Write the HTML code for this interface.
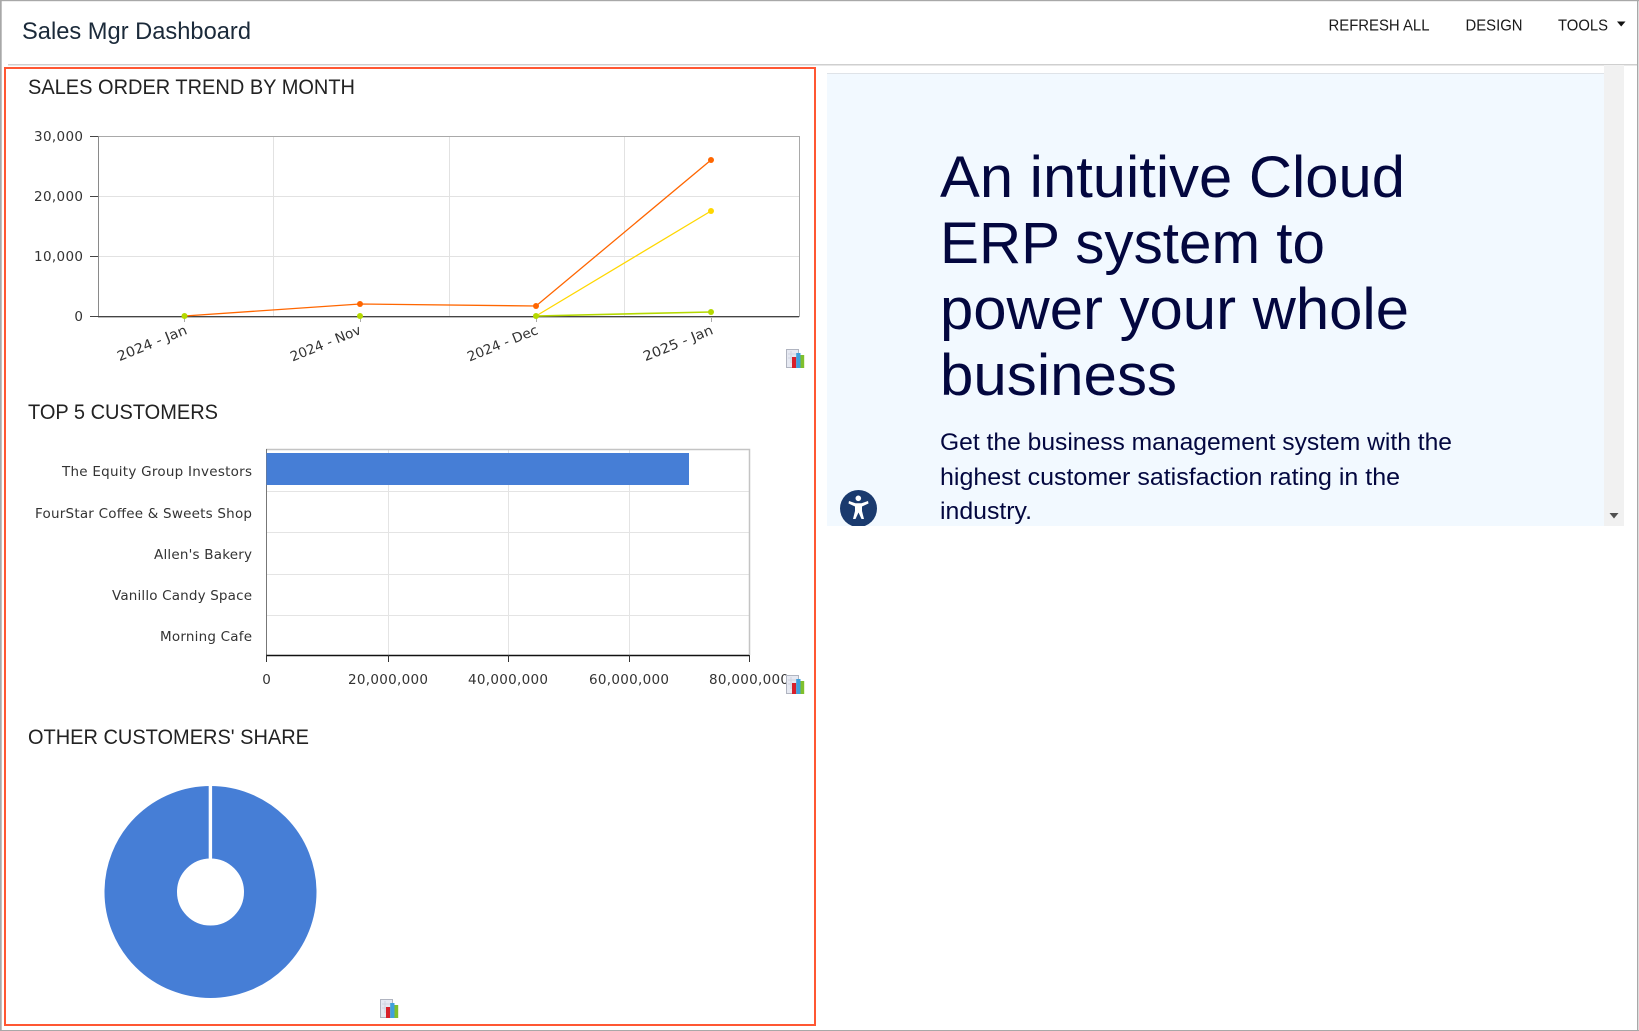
<!DOCTYPE html>
<html><head><meta charset="utf-8"><title>Sales Mgr Dashboard</title>
<style>
html,body{margin:0;padding:0;background:#fff;width:1639px;height:1031px;overflow:hidden}
svg{display:block}
text{font-family:"Liberation Sans",Arial,sans-serif}
.d{font-family:"DejaVu Sans",Verdana,sans-serif;font-size:13.5px;fill:#333}
.t{font-size:21px;fill:#222}
.n{font-size:15.5px;fill:#1a1a1a}
.h{font-size:58px;fill:#03073f}
.p{font-size:24px;fill:#03073f}
</style></head><body>
<svg width="1639" height="1031" viewBox="0 0 1639 1031" xmlns="http://www.w3.org/2000/svg">
<defs>
<clipPath id="hc"><rect x="827" y="65" width="777" height="461"/></clipPath>
<g id="ic">
<rect x="0.5" y="0.5" width="12" height="18" fill="#e6e9f2" stroke="#b0b4c0"/>
<path d="M2 5H11M2 9H11M5 2V14" stroke="#d0d4e0" fill="none"/>
<rect x="6" y="8" width="4.2" height="11" fill="#d8202a"/>
<rect x="10.2" y="4" width="4.3" height="15" fill="#3fa0dc"/>
<rect x="14.5" y="6" width="3.7" height="13" fill="#7fc02c"/>
</g>
</defs>
<!-- outer frame -->
<rect x="0" y="0" width="1639" height="1.2" fill="#a8a8a8"/>
<rect x="0" y="0" width="1.7" height="1031" fill="#a8a8a8"/>
<rect x="0" y="1030" width="1639" height="1" fill="#a8a8a8"/>
<rect x="1637" y="0" width="1.4" height="1031" fill="#a8a8a8"/>
<!-- header -->
<text x="22" y="39" font-size="24" fill="#1b2a3a" textLength="229" lengthAdjust="spacingAndGlyphs">Sales Mgr Dashboard</text>
<text class="n" x="1328.5" y="30.5" textLength="101" lengthAdjust="spacingAndGlyphs">REFRESH ALL</text>
<text class="n" x="1465.5" y="30.5" textLength="57" lengthAdjust="spacingAndGlyphs">DESIGN</text>
<text class="n" x="1558" y="30.5" textLength="50" lengthAdjust="spacingAndGlyphs">TOOLS</text>
<path d="M1617 21.5H1625.5L1621.2 26.5Z" fill="#111"/>
<rect x="8" y="64" width="1629" height="1.5" fill="#cfcfcf"/>
<!-- left red panel -->
<rect x="5" y="68" width="810" height="957" fill="#fff" stroke="#ff5733" stroke-width="2"/>
<!-- chart 1 -->
<text class="t" x="28" y="94" textLength="327" lengthAdjust="spacingAndGlyphs">SALES ORDER TREND BY MONTH</text>
<g fill="none" stroke-width="1">
<path d="M273.5 136V316M449.5 136V316M624.5 136V316M98 196.5H799M98 256.5H799" stroke="#e2e2e2"/>
<path d="M98.5 136.5H799.5V317" stroke="#a9a9a9"/>
<path d="M98.5 136V316" stroke="#8a8a8a"/>
<path d="M90 136.5H98M90 196.5H98M90 256.5H98M90 316.5H98" stroke="#444"/>
<path d="M184.5 316V322M360.5 316V322M536.5 316V322M711.5 316V322" stroke="#aaa"/>
<path d="M98 317.5H799" stroke="#bbb"/>
<path d="M90 316.5H799" stroke="#444"/>
</g>
<text class="d" x="83" y="141" text-anchor="end" textLength="49">30,000</text>
<text class="d" x="83" y="201" text-anchor="end" textLength="49">20,000</text>
<text class="d" x="83" y="261" text-anchor="end" textLength="49">10,000</text>
<text class="d" x="83" y="321" text-anchor="end">0</text>
<polyline points="536,316 711,312" fill="none" stroke="#b5d900" stroke-width="1.6"/>
<polyline points="536,316 711,211" fill="none" stroke="#ffd700" stroke-width="1.3"/>
<polyline points="184.5,316 360,304 536,306 711,160" fill="none" stroke="#ff6600" stroke-width="1.3"/>
<g fill="#ff6600"><circle cx="360" cy="304" r="3"/><circle cx="536" cy="306" r="3"/><circle cx="711" cy="160" r="3"/></g>
<circle cx="711" cy="211" r="3" fill="#ffd700"/>
<g fill="#b5d900"><circle cx="184.5" cy="316" r="3"/><circle cx="360" cy="316" r="3"/><circle cx="536" cy="316" r="3"/><circle cx="711" cy="312" r="3"/></g>
<text class="d" transform="translate(188 333.5) rotate(-22)" text-anchor="end" textLength="74" lengthAdjust="spacingAndGlyphs">2024 - Jan</text>
<text class="d" transform="translate(362 333.5) rotate(-22)" text-anchor="end" textLength="75" lengthAdjust="spacingAndGlyphs">2024 - Nov</text>
<text class="d" transform="translate(539 333.5) rotate(-22)" text-anchor="end" textLength="75" lengthAdjust="spacingAndGlyphs">2024 - Dec</text>
<text class="d" transform="translate(714 333.5) rotate(-22)" text-anchor="end" textLength="74" lengthAdjust="spacingAndGlyphs">2025 - Jan</text>
<use href="#ic" x="786" y="349"/>
<!-- chart 2 -->
<text class="t" x="28" y="419" textLength="190" lengthAdjust="spacingAndGlyphs">TOP 5 CUSTOMERS</text>
<g fill="none" stroke-width="1">
<path d="M388.5 449V655M508.5 449V655M629.5 449V655M266 491.5H749M266 532.5H749M266 574.5H749M266 615.5H749" stroke="#e4e4e4"/>
<path d="M266 449.5H749.5V655" stroke="#c4c4c4" stroke-width="1.5"/>
<path d="M266.5 449V655" stroke="#777"/>
<path d="M266 655.5H749" stroke="#111" stroke-width="1.5"/>
<path d="M266.5 655V662M388.5 655V662M508.5 655V662M629.5 655V662M749.5 655V662" stroke="#333"/>
</g>
<rect x="266.5" y="453" width="422.5" height="32" fill="#467ed6"/>
<text class="d" x="252" y="476" text-anchor="end" textLength="190">The Equity Group Investors</text>
<text class="d" x="252" y="518" text-anchor="end" textLength="217">FourStar Coffee &amp; Sweets Shop</text>
<text class="d" x="252" y="559" text-anchor="end" textLength="98">Allen's Bakery</text>
<text class="d" x="252" y="600" text-anchor="end" textLength="140">Vanillo Candy Space</text>
<text class="d" x="252" y="641" text-anchor="end" textLength="92">Morning Cafe</text>
<text class="d" x="266.5" y="684" text-anchor="middle">0</text>
<text class="d" x="388" y="684" text-anchor="middle" textLength="80">20,000,000</text>
<text class="d" x="508" y="684" text-anchor="middle" textLength="80">40,000,000</text>
<text class="d" x="629" y="684" text-anchor="middle" textLength="80">60,000,000</text>
<text class="d" x="749" y="684" text-anchor="middle" textLength="80">80,000,000</text>
<use href="#ic" x="786" y="675"/>
<!-- chart 3 -->
<text class="t" x="28" y="744" textLength="281" lengthAdjust="spacingAndGlyphs">OTHER CUSTOMERS' SHARE</text>
<circle cx="210.5" cy="892" r="69.75" fill="none" stroke="#467ed6" stroke-width="72.5"/>
<rect x="208.7" y="784" width="3.4" height="75" fill="#fff"/>
<use href="#ic" x="380" y="999"/>
<!-- right iframe -->
<rect x="1604" y="65" width="20" height="461" fill="#f1f1f1"/>
<path d="M1609.5 513H1618.5L1614 518.5Z" fill="#505050"/>
<g clip-path="url(#hc)">
<rect x="827" y="73" width="777" height="453" fill="#f2f9ff"/>
<rect x="827" y="73" width="777" height="1" fill="#dfe3e8"/>
<text class="h" x="940" y="197" textLength="465" lengthAdjust="spacingAndGlyphs">An intuitive Cloud</text>
<text class="h" x="940" y="263" textLength="385" lengthAdjust="spacingAndGlyphs">ERP system to</text>
<text class="h" x="940" y="329" textLength="469" lengthAdjust="spacingAndGlyphs">power your whole</text>
<text class="h" x="940" y="395" textLength="237" lengthAdjust="spacingAndGlyphs">business</text>
<text class="p" x="940" y="450" textLength="512" lengthAdjust="spacingAndGlyphs">Get the business management system with the</text>
<text class="p" x="940" y="485" textLength="460" lengthAdjust="spacingAndGlyphs">highest customer satisfaction rating in the</text>
<text class="p" x="940" y="519" textLength="92" lengthAdjust="spacingAndGlyphs">industry.</text>
<circle cx="858.5" cy="508.5" r="18.5" fill="#1a3a6e"/>
<circle cx="858.3" cy="498.3" r="2.8" fill="#fff"/>
<path d="M849 501L855.5 503.3H861.5L868 501L868.5 503.5L862 506.5V511L864 519H861.5L858.5 512.5L855.5 519H853L855 511V506.5L848.5 503.5Z" fill="#fff"/>
</g>
</svg>
</body></html>
